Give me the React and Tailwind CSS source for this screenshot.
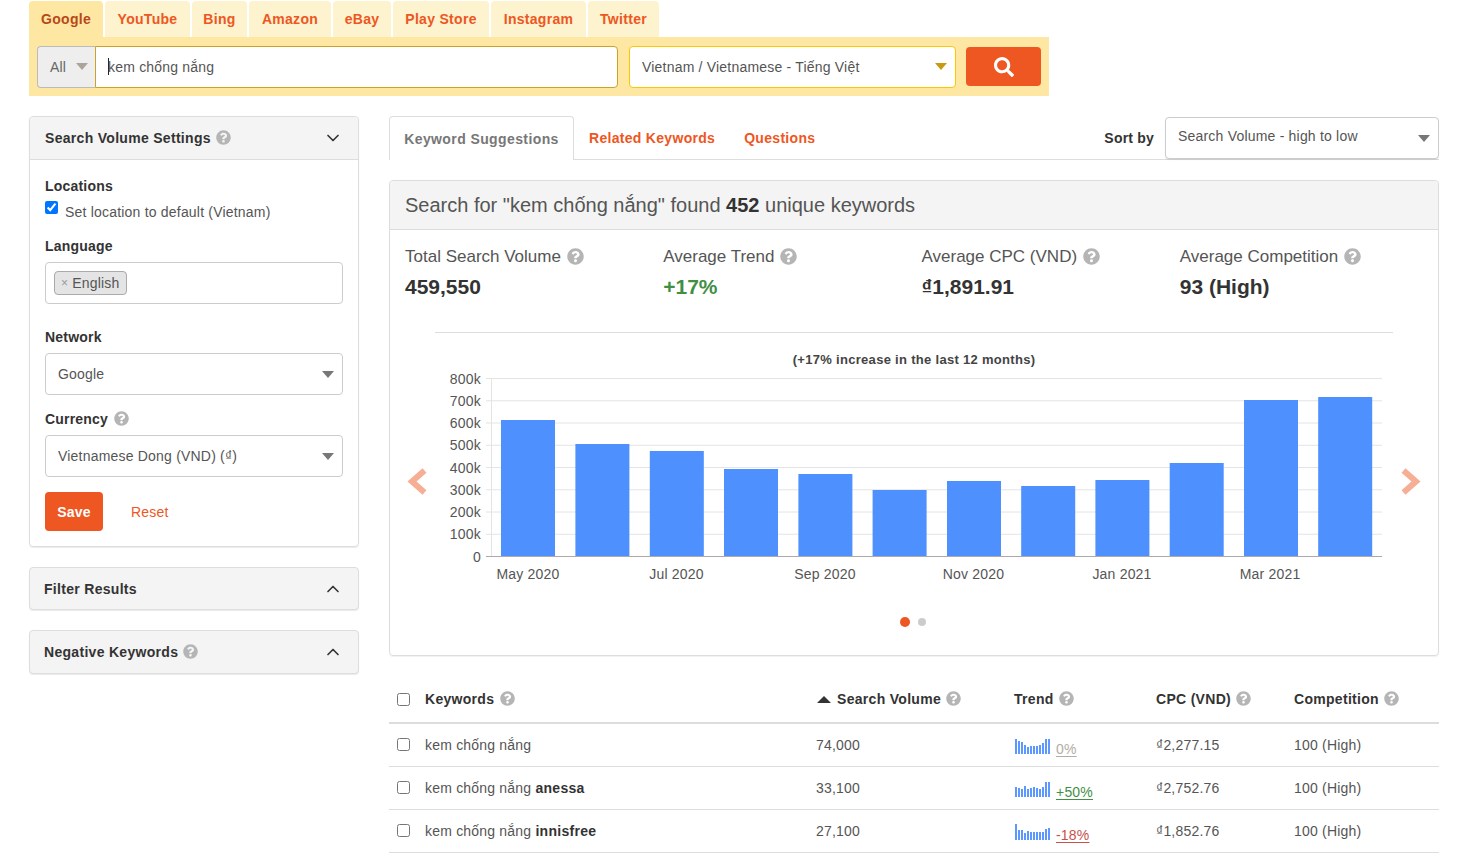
import { ChevronDown, ChevronUp } from 'lucide-react'
import { FaQuestionCircle, FaSearch } from 'react-icons/fa'

const tabs = ['YouTube', 'Bing', 'Amazon', 'eBay', 'Play Store', 'Instagram', 'Twitter']
const tabWidths = ['w-[85px]', 'w-[55px]', 'w-[82px]', 'w-[58px]', 'w-[96px]', 'w-[95px]', 'w-[71px]']

const stats = [
  { label: 'Total Search Volume', value: '459,550', color: 'text-[#333]' },
  { label: 'Average Trend', value: '+17%', color: 'text-[#3f8f46]' },
  { label: 'Average CPC (VND)', value: '₫1,891.91', color: 'text-[#333]' },
  { label: 'Average Competition', value: '93 (High)', color: 'text-[#333]' },
]

const barTops = [421, 445, 452, 470, 475, 491, 482, 487, 481, 464, 401, 398]
const barLefts = [501, 575.4, 649.8, 724, 798.4, 872.6, 947, 1021.2, 1095.4, 1169.7, 1244, 1318.2]
const yLabels = ['800k', '700k', '600k', '500k', '400k', '300k', '200k', '100k', '0']
const xLabels = [
  ['May 2020', 528],
  ['Jul 2020', 676.5],
  ['Sep 2020', 825],
  ['Nov 2020', 973.5],
  ['Jan 2021', 1122],
  ['Mar 2021', 1270],
]

const rows = [
  {
    base: 'kem chống nắng',
    extra: '',
    volume: '74,000',
    spark: [15, 13, 12, 9, 7, 8, 8, 8, 9, 11, 15, 15],
    trend: '0%',
    trendColor: 'text-[#b5aca3]',
    cpc: '₫2,277.15',
  },
  {
    base: 'kem chống nắng ',
    extra: 'anessa',
    volume: '33,100',
    spark: [10, 9, 8, 11, 8, 9, 10, 9, 8, 10, 15, 15],
    trend: '+50%',
    trendColor: 'text-[#3f8f46]',
    cpc: '₫2,752.76',
  },
  {
    base: 'kem chống nắng ',
    extra: 'innisfree',
    volume: '27,100',
    spark: [16, 10, 10, 7, 9, 8, 8, 8, 8, 8, 11, 12],
    trend: '-18%',
    trendColor: 'text-[#c9504b]',
    cpc: '₫1,852.76',
  },
]

function Help({ className = '' }) {
  return <FaQuestionCircle className={`inline-block text-[#b5b5b5] text-[15px] ${className}`} />
}

function Caret({ color = 'border-t-[#777]' }) {
  return <span className={`w-0 h-0 border-x-[6px] border-x-transparent border-t-[7px] ${color}`} />
}

function Select({ children }) {
  return (
    <div className="h-[42px] border border-[#ccc] rounded flex items-center justify-between pl-3 pr-2 text-[#555]">
      <span>{children}</span>
      <Caret />
    </div>
  )
}

function Label({ children }) {
  return <div className="font-bold text-[#333] leading-5 mb-[6px]">{children}</div>
}

function Spark({ values }) {
  return (
    <svg width="36" height="17" className="mr-[5px] shrink-0">
      {values.map((h, i) => (
        <rect key={i} x={i * 3} y={17 - h} width="2" height={h} fill="#5c98ff" />
      ))}
    </svg>
  )
}

function Chart() {
  // coordinates are page pixels, shifted by the svg origin
  return (
    <svg width="1048" height="300" viewBox="390 334 1048 300" className="block">
      <text x="914" y="365" textAnchor="middle" fontSize="13" fontWeight="700" fill="#444" letterSpacing="0.3">
        (+17% increase in the last 12 months)
      </text>
      {yLabels.map((l, i) => {
        const y = 379.5 + i * 22.25
        return (
          <g key={l}>
            <line x1="486" x2="1382" y1={y} y2={y} stroke={i === 8 ? '#aaa' : '#e4e4e4'} />
            <text x="481" y={y + 5} textAnchor="end" fontSize="14" fill="#555">{l}</text>
          </g>
        )
      })}
      <line x1="491.5" x2="491.5" y1="379" y2="557" stroke="#e4e4e4" />
      {barTops.map((top, i) => (
        <rect key={i} x={barLefts[i]} y={top} width="54" height={557 - top} fill="#4d90fe" />
      ))}
      {xLabels.map(([l, x]) => (
        <text key={l} x={x} y="580" textAnchor="middle" fontSize="14" fill="#555">{l}</text>
      ))}
      <polyline points="424.5,471.5 412,482.5 424.5,493.5" fill="none" stroke="#f6ae94" strokeWidth="6" />
      <polyline points="1403.5,471.5 1416,482.5 1403.5,493.5" fill="none" stroke="#f6ae94" strokeWidth="6" />
      <circle cx="905" cy="623" r="5" fill="#ee5622" />
      <circle cx="922" cy="623" r="4" fill="#ccc" />
    </svg>
  )
}

export default function App() {
  return (
    <div className="font-['Liberation_Sans',Arial,sans-serif] text-sm text-[#555] tracking-[0.2px] pl-[29px] w-[1439px] pt-px">
      {/* search bar */}
      <div className="flex gap-[2px] h-9 w-[1020px]">
        <div className="w-[74px] bg-[#fde7a2] rounded-t flex items-center justify-center font-bold text-[#b8481a] tracking-[0.3px]">
          Google
        </div>
        {tabs.map((t, i) => (
          <div key={t} className={`${tabWidths[i]} bg-[#fdf3cf] rounded-t flex items-center justify-center font-bold text-[#ee5622] tracking-[0.3px]`}>
            {t}
          </div>
        ))}
      </div>
      <div className="w-[1020px] h-[59px] bg-[#fde7a2] flex items-center pl-2 pr-2">
        <div className="w-[58px] h-[42px] bg-[#eee] border border-[#bbb] border-r-0 rounded-l flex items-center pl-3 gap-[10px] text-[#666]">
          <span>All</span>
          <Caret color="border-t-[#aaa49a]" />
        </div>
        <div className="w-[523px] h-[42px] bg-white border border-[#c9a227] rounded-r flex items-center pl-3 text-[#555]">
          <span className="w-px h-[17px] bg-[#222] -mr-px" />
          kem chống nắng
        </div>
        <div className="ml-[11px] w-[327px] h-[42px] bg-white border border-[#f9c800] rounded flex items-center justify-between pl-3 pr-2 text-[#555]">
          <span>Vietnam / Vietnamese - Tiếng Việt</span>
          <Caret color="border-t-[#c79a10]" />
        </div>
        <div className="ml-[10px] w-[75px] h-[39px] bg-[#ee5622] rounded flex items-center justify-center text-white text-xl">
          <FaSearch />
        </div>
      </div>

      <div className="flex gap-[30px] mt-5">
        {/* left column */}
        <div className="w-[330px] shrink-0">
          <div className="border border-[#ddd] rounded shadow-[0_1px_1px_rgba(0,0,0,0.08)]">
            <div className="h-[43px] bg-[#f4f4f4] border-b border-[#ddd] rounded-t flex items-center justify-between pl-[15px] pr-[15px]">
              <span className="font-bold text-[#333] tracking-[0.3px]">
                Search Volume Settings <Help className="-mt-[3px] ml-[1px]" />
              </span>
              <ChevronDown size={20} className="text-[#333]" />
            </div>
            <div className="px-[15px] pt-4 pb-[15px]">
              <Label>Locations</Label>
              <div className="flex items-start gap-[7px] -mt-[4px] h-6">
                <input type="checkbox" defaultChecked className="m-0 mt-[3px]" readOnly />
                <span className="mt-1">Set location to default (Vietnam)</span>
              </div>
              <div className="mt-[14px]">
                <Label>Language</Label>
              </div>
              <div className="h-[42px] border border-[#ccc] rounded flex items-center pl-2">
                <span className="h-6 px-[6px] bg-[#e4e4e4] border border-[#aaa] rounded flex items-center gap-1 text-[#555]">
                  <span className="text-[#999] text-xs">×</span> English
                </span>
              </div>
              <div className="mt-[23px]">
                <Label>Network</Label>
              </div>
              <Select>Google</Select>
              <div className="mt-[14px]">
                <Label>Currency <Help className="-mt-[3px] ml-[2px]" /></Label>
              </div>
              <Select>Vietnamese Dong (VND) (₫)</Select>
              <div className="flex items-center mt-[15px]">
                <div className="w-[58px] h-[39px] bg-[#ee5622] rounded flex items-center justify-center text-white font-bold">Save</div>
                <span className="ml-7 text-[#ee5622]">Reset</span>
              </div>
            </div>
          </div>
          <div className="mt-5 h-[43px] bg-[#f4f4f4] border border-[#ddd] rounded shadow-[0_1px_1px_rgba(0,0,0,0.08)] flex items-center justify-between px-[14px]">
            <span className="font-bold text-[#333] tracking-[0.3px]">Filter Results</span>
            <ChevronUp size={20} className="text-[#333] mr-px" />
          </div>
          <div className="mt-5 h-[44px] bg-[#f4f4f4] border border-[#ddd] rounded shadow-[0_1px_1px_rgba(0,0,0,0.08)] flex items-center justify-between px-[14px]">
            <span className="font-bold text-[#333] tracking-[0.3px]">Negative Keywords <Help className="-mt-[3px] ml-[1px]" /></span>
            <ChevronUp size={20} className="text-[#333] mr-px" />
          </div>
        </div>

        {/* right column */}
        <div className="w-[1050px]">
          <div className="h-11 border-b border-[#ddd] flex items-end relative">
            <div className="w-[185px] h-[44px] border border-[#ddd] border-b-0 rounded-t bg-white flex items-center justify-center font-bold text-[#777] tracking-[0.4px] -mb-px">
              Keyword Suggestions
            </div>
            <div className="h-[43px] flex items-center ml-[15px] font-bold text-[#ee5622] tracking-[0.3px]">Related Keywords</div>
            <div className="h-[43px] flex items-center ml-[29px] font-bold text-[#ee5622] tracking-[0.3px]">Questions</div>
            <div className="ml-auto h-[43px] flex items-center">
              <span className="font-bold text-[#333] mr-[11px]">Sort by</span>
              <div className="w-[274px] h-[42px] border border-[#ccc] rounded shadow-[0_1px_1px_rgba(0,0,0,0.08)] bg-white flex items-center justify-between pl-3 pr-2 -mb-[1px]">
                <span className="-mt-1">Search Volume - high to low</span>
                <Caret />
              </div>
            </div>
          </div>

          <div className="mt-5 border border-[#ddd] rounded h-[476px] shadow-[0_1px_1px_rgba(0,0,0,0.06)]">
            <div className="h-[49px] bg-[#f4f4f4] border-b border-[#ddd] rounded-t flex items-center pl-[15px] text-xl tracking-normal text-[#555]">
              <span>Search for "kem chống nắng" found <b className="text-[#333]">452</b> unique keywords</span>
            </div>
            <div className="grid grid-cols-4 w-[1048px] pl-[15px] pt-[16px] h-[102px]">
              {stats.map((s) => (
                <div key={s.label}>
                  <div className="text-[17px] leading-[22px] tracking-normal text-[#555]">
                    {s.label} <Help className="text-[17px] -mt-[3px] ml-[1px]" />
                  </div>
                  <div className={`mt-[5px] text-[21px] leading-7 font-bold tracking-normal ${s.color}`}>{s.value}</div>
                </div>
              ))}
            </div>
            <div className="mx-[45px] border-t border-[#ddd]" />
            <Chart />
          </div>

          {/* keyword table */}
          <div className="mt-5 grid grid-cols-[427px_198px_142px_138px_145px] h-[48px] items-center border-b-2 border-[#ddd] font-bold text-[#333] tracking-[0.3px]">
            <div className="flex items-center pl-2">
              <input type="checkbox" className="m-0" />
              <span className="ml-[15px]">Keywords <Help className="-mt-[3px] ml-[1px]" /></span>
            </div>
            <div className="flex items-center">
              <span className="w-0 h-0 border-x-[7px] border-x-transparent border-b-[7px] border-b-[#333] ml-px mr-[6px]" />
              <span>Search Volume <Help className="-mt-[3px] ml-[1px]" /></span>
            </div>
            <div>Trend <Help className="-mt-[3px] ml-[1px]" /></div>
            <div>CPC (VND) <Help className="-mt-[3px] ml-[1px]" /></div>
            <div>Competition <Help className="-mt-[3px] ml-[1px]" /></div>
          </div>
          {rows.map((r) => (
            <div key={r.volume} className="grid grid-cols-[427px_198px_142px_138px_145px] h-[43px] items-center border-b border-[#ddd]">
              <div className="flex items-center pl-2">
                <input type="checkbox" className="m-0 -mt-[2px]" />
                <span className="ml-[15px]">{r.base}<b className="text-[#333] tracking-[0.3px]">{r.extra}</b></span>
              </div>
              <div>{r.volume}</div>
              <div className="flex items-end pl-px">
                <Spark values={r.spark} />
                <span className={`underline underline-offset-2 leading-4 -mb-[3px] ${r.trendColor}`}>{r.trend}</span>
              </div>
              <div>{r.cpc}</div>
              <div>100 (High)</div>
            </div>
          ))}
        </div>
      </div>
    </div>
  )
}
